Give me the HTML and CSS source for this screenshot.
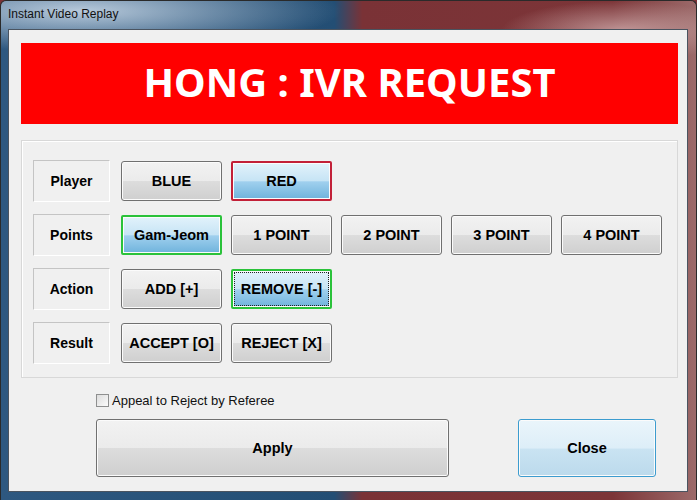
FILE: index.html
```html
<!DOCTYPE html>
<html lang="en">
<head>
    <meta charset="UTF-8">
    <title>Instant Video Replay</title>
    <link rel="stylesheet" href="styles.css">
</head>
<body>

    <div class="window">
        <div class="titlebar">Instant Video Replay</div>
        <div class="client">
            <div class="banner">HONG : IVR REQUEST</div>

            <div class="panel">
                <div class="row">
                    <div class="label">Player</div>
                    <button class="btn">BLUE</button>
                    <button class="btn on red">RED</button>
                </div>
                <div class="row">
                    <div class="label">Points</div>
                    <button class="btn on green">Gam-Jeom</button>
                    <button class="btn">1 POINT</button>
                    <button class="btn">2 POINT</button>
                    <button class="btn">3 POINT</button>
                    <button class="btn">4 POINT</button>
                </div>
                <div class="row">
                    <div class="label">Action</div>
                    <button class="btn">ADD [+]</button>
                    <button class="btn on green focus">REMOVE [-]</button>
                </div>
                <div class="row">
                    <div class="label">Result</div>
                    <button class="btn">ACCEPT [O]</button>
                    <button class="btn">REJECT [X]</button>
                </div>
            </div>

            <label class="appeal"><span class="check"></span>Appeal to Reject by Referee</label>

            <div class="actions">
                <button class="btn apply">Apply</button>
                <button class="btn close">Close</button>
            </div>
        </div>
    </div>

</body>
</html>
```

FILE: styles.css
```css
body {
    margin: 0;
    width: 697px;
    height: 500px;
    overflow: hidden;
    font-family: "Liberation Sans", Arial, sans-serif;
    background: #7a3236;
}
.window {
    display: flex;
    flex-direction: column;
    height: 500px;
    box-sizing: border-box;
    padding: 0 8px 8px 7px;
    border-radius: 6px 6px 0 0;
    border: 1px solid #2a2a2a;
    border-bottom: none;
    background:
        radial-gradient(ellipse 260px 40px at 80px 10px, rgba(230, 240, 250, 0.75), rgba(230, 240, 250, 0) 100%),
        radial-gradient(ellipse 120px 30px at 620px 30px, rgba(220, 190, 190, 0.7), rgba(220, 190, 190, 0) 100%),
        linear-gradient(to right, #2e5880 0%, #234e74 48%, #7a3236 52%, #7c3538 88%, #9c6a6a 100%);
}
.titlebar {
    height: 28px;
    box-sizing: border-box;
    padding: 5px 0 0 0;
    font-size: 12px;
    line-height: 16px;
    color: #111;
}
.client {
    flex: 1;
    display: flex;
    flex-direction: column;
    background-color: #f0f0f0;
    border: 1px solid #4a5460;
    padding: 13px 9px 0 12px;
}
.banner {
    height: 81px;
    background-color: #ff0000;
    color: #ffffff;
    font-family: "Noto Sans", sans-serif;
    font-weight: bold;
    font-size: 40px;
    display: flex;
    align-items: center;
    justify-content: center;
    padding-bottom: 4px;
    box-sizing: border-box;
}
.panel {
    margin-top: 16px;
    border: 1px solid #d8d8d8;
    box-shadow: inset 1px 1px 0 #ffffff;
    padding: 19px 11px 13px;
    display: flex;
    flex-direction: column;
    gap: 12px;
}
.row {
    display: flex;
    align-items: center;
    gap: 9px;
}
.label {
    width: 77px;
    height: 42px;
    box-sizing: border-box;
    margin-right: 2px;
    border: 1px solid;
    border-color: #c4c4c4 #ffffff #ffffff #c4c4c4;
    display: flex;
    align-items: center;
    justify-content: center;
    font-weight: bold;
    font-size: 14px;
}
.btn {
    width: 101px;
    height: 40px;
    box-sizing: border-box;
    border: 1px solid #707070;
    border-radius: 3px;
    box-shadow: inset 0 0 0 1px #fbfbfb;
    background: linear-gradient(#f2f2f2 0%, #ebebeb 50%, #dddddd 50%, #cfcfcf 100%);
    font-family: "Liberation Sans", Arial, sans-serif;
    font-weight: bold;
    font-size: 14.5px;
    color: #000;
    padding: 0;
    cursor: pointer;
}
.btn.on {
    background: linear-gradient(#e2f2fb 0%, #c6e4f5 50%, #a0d0ee 52%, #6fb3dc 100%);
    border-width: 2px;
    border-radius: 2px;
}
.btn.red {
    border-color: #c22038;
}
.btn.green {
    border-color: #2ac23a;
}
.btn.focus {
    outline: 1px dotted #222;
    outline-offset: -4px;
}
.appeal {
    display: flex;
    align-items: center;
    margin: 14px 0 0 75px;
    height: 16px;
    font-size: 13px;
    color: #111;
}
.check {
    width: 11px;
    height: 11px;
    border: 1px solid #8e8f8f;
    background: linear-gradient(135deg, #dcdcdc, #fbfbfb);
    margin-right: 3px;
}
.actions {
    display: flex;
    justify-content: space-between;
    margin: 11px 22px 0 75px;
}
.btn.apply {
    width: 353px;
    height: 58px;
}
.btn.close {
    width: 138px;
    height: 58px;
    border-color: #3c9ccf;
    background: linear-gradient(#eaf5fb 0%, #ddeef8 50%, #c9e3f2 52%, #bcdaec 100%);
}
```
